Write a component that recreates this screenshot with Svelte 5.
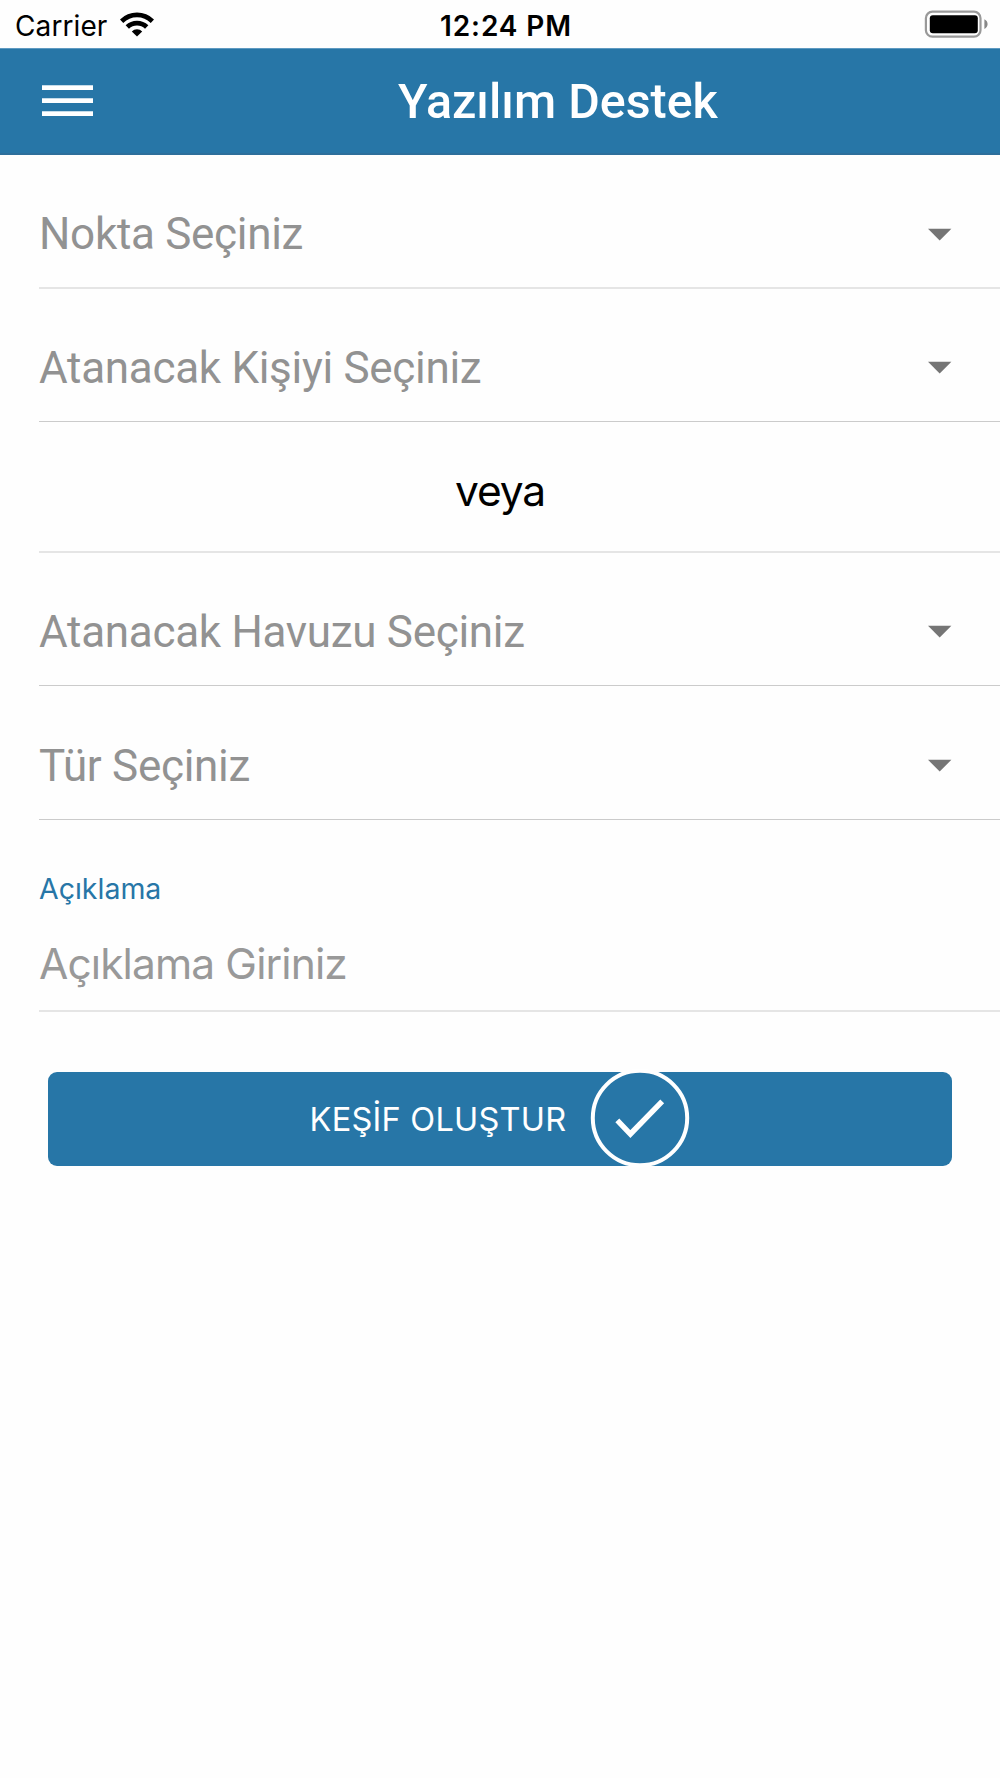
<script>
  const assignFields = [
    { id: 'point', label: 'Nokta Seçiniz', line: 'soft' },
    { id: 'person', label: 'Atanacak Kişiyi Seçiniz', line: 'sharp' }
  ];
  const poolFields = [
    { id: 'pool', label: 'Atanacak Havuzu Seçiniz', line: 'sharp' },
    { id: 'kind', label: 'Tür Seçiniz', line: 'sharp' }
  ];
</script>

{#snippet selectRow(field)}
  <div class="row select {field.line} {field.id}">
    <span class="label">{field.label}</span>
    <svg class="caret" width="24" height="14" viewBox="0 0 24 14" aria-hidden="true">
      <path d="M0 0.8H23.4L11.7 12.6Z" fill="#757575" />
    </svg>
  </div>
{/snippet}

<div class="screen">
  <div class="status">
    <div class="carrier">
      <span>Carrier</span>
      <svg width="34" height="25" viewBox="0 0 34 25" aria-hidden="true">
        <g fill="none" stroke="#000" stroke-width="4.8">
          <path d="M1.6 9.2A22 22 0 0 1 32.4 9.2" />
          <path d="M7.3 15A14 14 0 0 1 26.7 15" />
        </g>
        <path d="M11.8 19.4A7.4 7.4 0 0 1 22.2 19.4L17 24.6Z" fill="#000" />
      </svg>
    </div>
    <span class="time">12:24 PM</span>
    <svg class="battery" width="64" height="28" viewBox="0 0 64 28" aria-hidden="true">
      <rect x="1.9" y="1.7" width="54.6" height="25" rx="6.5" fill="none" stroke="#999" stroke-width="2.2" />
      <rect x="5.8" y="5.2" width="48" height="18" rx="3" fill="#000" />
      <path d="M60.4 9.2Q63.6 10.9 63.6 14.1Q63.6 17.3 60.4 19Z" fill="#888" />
    </svg>
  </div>

  <header>
    <button class="menu" aria-label="Menü"><i></i><i></i><i></i></button>
    <h1>Yazılım Destek</h1>
  </header>

  <main>
    {#each assignFields as field (field.id)}
      {@render selectRow(field)}
    {/each}
    <div class="row or soft"><span>veya</span></div>
    {#each poolFields as field (field.id)}
      {@render selectRow(field)}
    {/each}
    <div class="row note soft">
      <span class="caption">Açıklama</span>
      <span class="placeholder">Açıklama Giriniz</span>
    </div>

    <button class="submit">
      <span>KEŞİF OLUŞTUR</span>
      <svg width="100" height="100" viewBox="0 0 100 100" aria-hidden="true">
        <circle cx="50" cy="50" r="47.2" fill="none" stroke="#fff" stroke-width="4" />
        <path d="M27.3 52.3L40.4 66L72.2 33.4" fill="none" stroke="#fff" stroke-width="5.4" />
      </svg>
    </button>
  </main>
</div>

<style>
  :global(body) { margin: 0; background: #fefefe; }
  .screen {
    width: 1000px;
    height: 1778px;
    overflow: hidden;
    background: #fefefe;
    font-family: Inter, "Liberation Sans", sans-serif;
  }
  button { border: 0; padding: 0; margin: 0; font: inherit; color: inherit; background: none; }
  .status {
    display: grid;
    grid-template-columns: 1fr auto 1fr;
    height: 48px;
    box-sizing: border-box;
    padding: 0 12px 0 15px;
    color: #000;
    font-size: 28px;
    line-height: 52px;
    white-space: nowrap;
  }
  .carrier { display: flex; gap: 13px; letter-spacing: 0.1px; }
  .carrier svg { margin-top: 12px; }
  .time { font-weight: 580; letter-spacing: 0.9px; margin-left: 9px; }
  .battery { justify-self: end; margin-top: 10px; }

  header {
    display: flex;
    height: 107px;
    box-sizing: border-box;
    border-top: 1px solid #5e9ac1;
    border-bottom: 2px solid #2d6f9b;
    background: #2776a7;
    color: #fff;
  }
  .menu {
    display: flex;
    flex-direction: column;
    gap: 8px;
    width: 51px;
    margin: 36px 0 0 42px;
  }
  .menu i {
    height: 4px;
    border-top: 1px solid #c4dbe9;
    background: #fff;
  }
  h1 {
    margin: 0 0 0 305px;
    font: 500 48.4px/106px Roboto, sans-serif;
    white-space: nowrap;
  }

  .row { margin-left: 39px; box-sizing: border-box; white-space: nowrap; }
  .soft { border-bottom: 2px solid #e5e5e5; }
  .sharp { border-bottom: 1px solid #cbcbcb; }
  .select {
    display: flex;
    justify-content: space-between;
    height: 133px;
    padding: 54px 48px 0 0;
    font: 400 44px/50px Roboto, sans-serif;
    letter-spacing: -0.3px;
    color: #929292;
  }
  .point { height: 134px; }
  .kind { height: 134px; padding-top: 55px; }
  .caret { margin-top: 18px; }
  .point .caret { margin-top: 19px; }
  .or {
    height: 131px;
    padding: 43px 39px 0 0;
    text-align: center;
    font-size: 42.5px;
    line-height: 52px;
    letter-spacing: -1.1px;
    color: #000;
  }
  .note {
    display: flex;
    flex-direction: column;
    height: 192px;
    padding-top: 49px;
  }
  .caption { font-size: 28.5px; line-height: 40px; color: #2776a7; }
  .placeholder {
    margin-top: 29px;
    font-size: 42.5px;
    line-height: 52px;
    letter-spacing: -0.9px;
    color: #999;
  }

  .submit {
    display: flex;
    justify-content: center;
    align-items: center;
    gap: 24px;
    width: 904px;
    height: 94px;
    margin: 60px 0 0 48px;
    border-radius: 9px;
    background: #2776a7;
    color: #fff;
    font-size: 32.5px;
    font-weight: 380;
    letter-spacing: 0.25px;
    white-space: nowrap;
  }
  .submit svg { flex: none; margin-top: -3px; }
</style>
